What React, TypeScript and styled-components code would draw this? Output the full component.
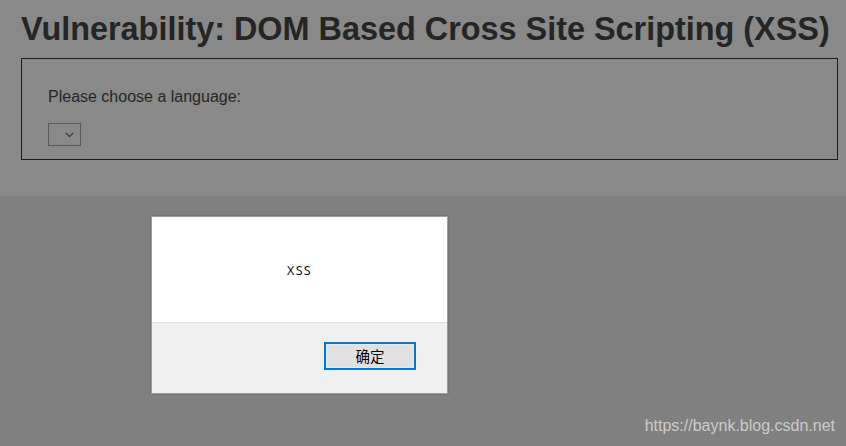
import React from "react";
import styled, { createGlobalStyle } from "styled-components";

const Global = createGlobalStyle`
  html, body { margin: 0; padding: 0; }
  body { width: 846px; height: 446px; overflow: hidden; background: #808080; font-family: "Liberation Sans", Arial, sans-serif; }
  #root { width: 846px; height: 446px; }
`;

const Screen = styled.div`
  position: relative;
  width: 846px;
  height: 446px;
  display: flex;
  flex-direction: column;
  background: #808080;
`;

const PageArea = styled.div`
  height: 196px;
  box-sizing: border-box;
  background: #888988;
  padding: 11px 8px 0 21px;
  display: flex;
  flex-direction: column;
`;

const Title = styled.h1`
  margin: 0 0 11px 0;
  font-family: "Liberation Sans", Arial, sans-serif;
  font-weight: bold;
  font-size: 32.4px;
  line-height: 36px;
  color: #252525;
  white-space: nowrap;
`;

const FormBox = styled.div`
  width: 817px;
  height: 102px;
  box-sizing: border-box;
  border: 1px solid #1c1c1c;
  padding: 29px 26px 0 26px;
  display: flex;
  flex-direction: column;
  gap: 17px;
`;

const Label = styled.div`
  font-size: 16px;
  line-height: 18px;
  color: #262626;
`;

const SelectBox = styled.div`
  width: 33px;
  height: 23px;
  box-sizing: border-box;
  border: 1px solid #5a5a5a;
  display: flex;
  align-items: center;
  justify-content: flex-end;
  padding-right: 6px;
`;

const Backdrop = styled.div`
  flex: 1;
  padding: 20px 0 0 151px;
`;

const Dialog = styled.div`
  width: 297px;
  height: 178px;
  box-sizing: border-box;
  border: 1px solid #9c9c9c;
  background: #f0f0f0;
  display: flex;
  flex-direction: column;
  box-shadow: 0 0 2px rgba(0, 0, 0, 0.25);
`;

const Message = styled.div`
  height: 106px;
  background: #ffffff;
  border-bottom: 1px solid #dfdfdf;
  display: flex;
  align-items: center;
  justify-content: center;
  font-family: "Noto Sans", "DejaVu Sans", sans-serif;
  font-size: 12.5px;
  letter-spacing: 1.3px;
  color: #111;
  padding-top: 1px;
  box-sizing: border-box;
`;

const Footer = styled.div`
  flex: 1;
  display: flex;
  justify-content: flex-end;
  align-items: flex-start;
  padding: 19px 31px 0 0;
`;

const OkButton = styled.button`
  width: 92px;
  height: 28px;
  box-sizing: border-box;
  border: 2px solid #0078d7;
  background: #e1e1e1;
  box-shadow: inset 0 0 0 1px #e8e8e8;
  font-family: "Noto Sans CJK SC", "Noto Sans", sans-serif;
  font-size: 14.5px;
  line-height: 20px;
  color: #000;
  padding: 0;
  display: flex;
  align-items: center;
  justify-content: center;
`;

const Watermark = styled.div`
  position: absolute;
  right: 11px;
  bottom: 11px;
  font-family: "Liberation Sans", Arial, sans-serif;
  font-size: 16px;
  line-height: 18px;
  color: #cbcbcb;
`;

export default function App() {
  return (
    <>
      <Global />
      <Screen>
        <PageArea>
          <Title>Vulnerability: DOM Based Cross Site Scripting (XSS)</Title>
          <FormBox>
            <Label>Please choose a language:</Label>
            <SelectBox>
              <svg width="9" height="6" viewBox="0 0 9 6">
                <path d="M0.8 0.8 L4.5 4.6 L8.2 0.8" fill="none" stroke="#333" strokeWidth="1.2" />
              </svg>
            </SelectBox>
          </FormBox>
        </PageArea>
        <Backdrop>
          <Dialog>
            <Message>XSS</Message>
            <Footer>
              <OkButton>确定</OkButton>
            </Footer>
          </Dialog>
        </Backdrop>
        <Watermark>https://baynk.blog.csdn.net</Watermark>
      </Screen>
    </>
  );
}
